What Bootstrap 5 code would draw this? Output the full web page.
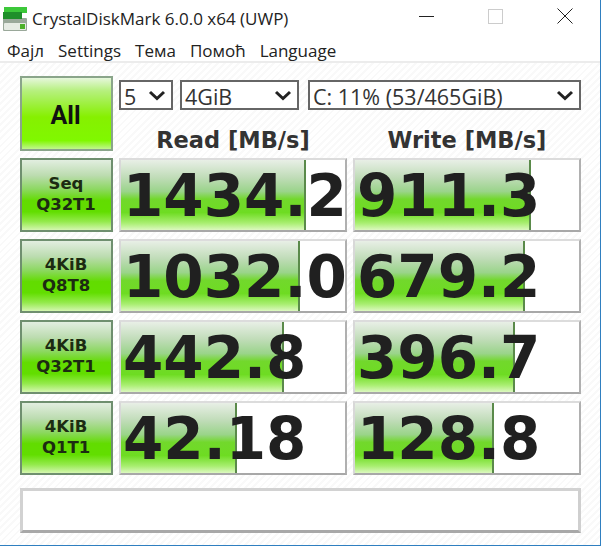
<!DOCTYPE html>
<html lang="sr">
<head>
<meta charset="utf-8">
<title>CrystalDiskMark</title>
<link href="https://cdn.jsdelivr.net/npm/bootstrap@5.3.0/dist/css/bootstrap.min.css" rel="stylesheet">
<style>
html,body{height:546px;overflow:hidden;}
body{background:#fff;font-family:"Open Sans","Noto Sans",sans-serif;color:#222;}
.app-frame{width:601px;height:546px;border-right:1px solid #2f7fc0;border-bottom:1px solid #2f7fc0;display:flex;flex-direction:column;}
.title-bar{height:37px;padding-left:3px;}
.title-text{font-size:17px;line-height:1;margin-left:3px;color:#222;}
.win-btns{margin-left:auto;padding-right:27px;padding-bottom:4px;gap:54px;}
.menu-row{height:27px;padding-left:7px;padding-top:3px;gap:14px;font-size:17px;border-bottom:2px solid #ececec;line-height:1;}
.main-pane{flex:1;padding:13px 20px 12px 20px;background:repeating-linear-gradient(135deg,#fff 0 3px,#f9f9f9 3px 5px);}
.bench-grid{display:grid;grid-template-columns:93px 228px 228px;column-gap:6px;row-gap:7px;grid-template-rows:75px 74px 74px 74px 74px;}
.top-left{grid-column:2 / 4;display:flex;flex-direction:column;}
.sel-row{display:flex;padding-top:4px;height:34px;}
.sel-box{height:30px;border:2px solid #666;background:#fff;font-size:21.5px;line-height:26px;padding-left:3px;display:flex;align-items:center;justify-content:space-between;padding-right:5px;color:#333;}
.sel-box span{padding-top:3px;}
.hdr-row{display:grid;grid-template-columns:228px 228px;column-gap:6px;margin-top:19px;}
.hdr-cell{text-align:center;font-family:"DejaVu Sans",sans-serif;font-weight:700;font-size:22.5px;line-height:22px;color:#333;}
.go-btn{border:2px solid #6f8f6f;font-family:"DejaVu Sans",sans-serif;font-weight:700;color:#1c2b12;display:flex;align-items:center;justify-content:center;text-align:center;background:linear-gradient(#e2eee0 0,#bcdcb0 22%,#8cd860 42%,#62dc00 58%,#62de00 74%,#94ea4c 88%,#d4f6b0 100%);font-size:16.5px;line-height:21px;padding:0 1px 2px 0;border-radius:0;}
.go-all{font-family:Roboto,sans-serif;font-size:25px;padding:3px 2px 0 0;border-color:#8aa58a;background:linear-gradient(#e6f7dc 0,#b6f07e 18%,#86f000 55%,#80f800 88%,#c0f68e 100%);color:#111;}
.val-box{position:relative;background:#fff;border:2px solid;border-color:#dcdcdc #b0b0b0 #a8a8a8 #d8d8d8;overflow:hidden;}
.val-fill{position:absolute;left:0;top:0;bottom:0;background:linear-gradient(#e8efe6 0,#c0dcb8 25%,#9ad48a 45%,#72d82c 56%,#6edc22 75%,#a8ee70 90%,#dcf8c0 100%);border-right:2px solid #5a8a4a;}
.val-num{position:absolute;left:0;right:0;top:0;bottom:0;font-family:"DejaVu Sans",sans-serif;font-weight:700;font-size:58px;line-height:72px;color:#202020;white-space:nowrap;padding-left:2px;}
.log-box{height:45px;margin-top:13px;width:561px;border:3px solid;border-color:#d2d2d2 #cfcfcf #a8a8a8 #d2d2d2;background:#fff;}
</style>
</head>
<body>
<div class="app-frame">
  <div class="title-bar d-flex align-items-center">
    <svg width="26" height="28" viewBox="0 0 26 28">
      <rect x="0" y="14" width="24" height="13" rx="1" fill="#9aa89a"/>
      <rect x="1" y="19" width="22" height="7" rx="1" fill="#e6ebe4"/>
      <rect x="17" y="20" width="5" height="5" fill="#4cb02a"/>
      <path d="M1 3 H24 V9 H1 Z" fill="#3cc83a"/>
      <path d="M0 8 H19 V15 H0 Z" fill="#1f8f2a"/>
    </svg>
    <span class="title-text">CrystalDiskMark 6.0.0 x64 (UWP)</span>
    <div class="win-btns d-flex align-items-center">
      <svg width="15" height="15" viewBox="0 0 15 15"><path d="M0 7.5H15" stroke="#222" stroke-width="1"/></svg>
      <svg width="15" height="15" viewBox="0 0 15 15"><rect x=".5" y=".5" width="14" height="14" fill="none" stroke="#ccc"/></svg>
      <svg width="16" height="16" viewBox="0 0 16 16"><path d="M.5 .5L15.5 15.5M15.5 .5L.5 15.5" stroke="#222" stroke-width="1"/></svg>
    </div>
  </div>
  <div class="menu-row d-flex align-items-center">
    <span>Фајл</span><span>Settings</span><span>Тема</span><span>Помоћ</span><span>Language</span>
  </div>
  <div class="main-pane">
    <div class="bench-grid">
      <button class="go-btn go-all" type="button">All</button>
      <div class="top-left">
        <div class="sel-row">
          <div class="sel-box" style="width:54px"><span>5</span><svg width="18" height="11" viewBox="0 0 18 11"><path d="M2 2L9 8.5L16 2" fill="none" stroke="#222" stroke-width="3"/></svg></div>
          <div class="sel-box" style="width:119px;margin-left:7px"><span>4GiB</span><svg width="18" height="11" viewBox="0 0 18 11"><path d="M2 2L9 8.5L16 2" fill="none" stroke="#222" stroke-width="3"/></svg></div>
          <div class="sel-box" style="width:273px;margin-left:9px"><span>C: 11% (53/465GiB)</span><svg width="18" height="11" viewBox="0 0 18 11"><path d="M2 2L9 8.5L16 2" fill="none" stroke="#222" stroke-width="3"/></svg></div>
        </div>
        <div class="hdr-row"><div class="hdr-cell">Read [MB/s]</div><div class="hdr-cell">Write [MB/s]</div></div>
      </div>

      <button class="go-btn" type="button">Seq<br>Q32T1</button>
      <div class="val-box"><div class="val-fill" style="width:185px"></div><div class="val-num">1434.2</div></div>
      <div class="val-box"><div class="val-fill" style="width:176px"></div><div class="val-num">911.3</div></div>

      <button class="go-btn" type="button">4KiB<br>Q8T8</button>
      <div class="val-box"><div class="val-fill" style="width:179px"></div><div class="val-num">1032.0</div></div>
      <div class="val-box"><div class="val-fill" style="width:170px"></div><div class="val-num">679.2</div></div>

      <button class="go-btn" type="button">4KiB<br>Q32T1</button>
      <div class="val-box"><div class="val-fill" style="width:163px"></div><div class="val-num">442.8</div></div>
      <div class="val-box"><div class="val-fill" style="width:160px"></div><div class="val-num">396.7</div></div>

      <button class="go-btn" type="button">4KiB<br>Q1T1</button>
      <div class="val-box"><div class="val-fill" style="width:116px"></div><div class="val-num">42.18</div></div>
      <div class="val-box"><div class="val-fill" style="width:139px"></div><div class="val-num">128.8</div></div>
    </div>
    <div class="log-box"></div>
  </div>
</div>
</body>
</html>
